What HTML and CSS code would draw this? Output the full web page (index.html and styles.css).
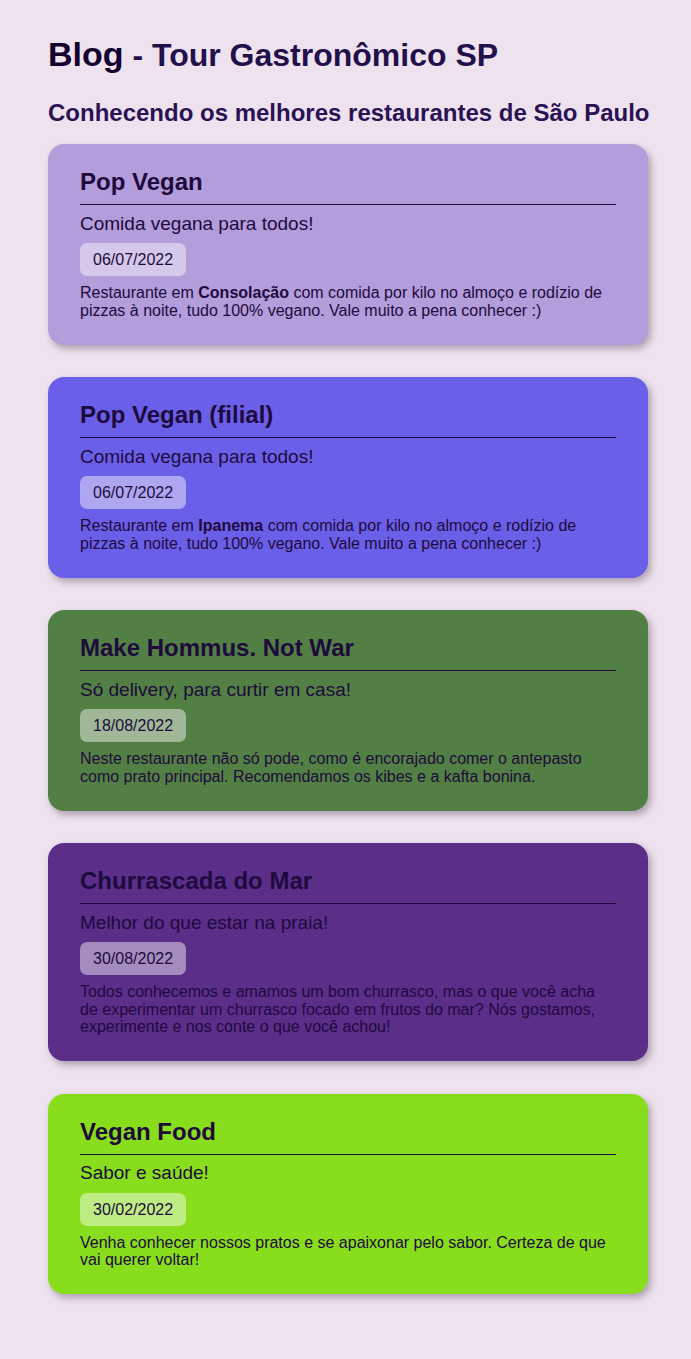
FILE: index.html
```html
<!DOCTYPE html>
<html lang="pt-BR">
<head>
<meta charset="utf-8">
<title>Blog - Tour Gastronômico SP</title>
<link rel="stylesheet" href="styles.css">
</head>
<body>
<main class="page">
  <h1 class="title"><span class="title-blog">Blog</span> - Tour Gastronômico SP</h1>
  <h2 class="subtitle">Conhecendo os melhores restaurantes de São Paulo</h2>

  <article class="card card-lilac">
    <h3 class="card-title">Pop Vegan</h3>
    <p class="card-tagline">Comida vegana para todos!</p>
    <span class="card-date">06/07/2022</span>
    <p class="card-text">Restaurante em <strong>Consolação</strong> com comida por kilo no almoço e rodízio de pizzas à noite, tudo 100% vegano. Vale muito a pena conhecer :)</p>
  </article>

  <article class="card card-indigo">
    <h3 class="card-title">Pop Vegan (filial)</h3>
    <p class="card-tagline">Comida vegana para todos!</p>
    <span class="card-date">06/07/2022</span>
    <p class="card-text">Restaurante em <strong>Ipanema</strong> com comida por kilo no almoço e rodízio de pizzas à noite, tudo 100% vegano. Vale muito a pena conhecer :)</p>
  </article>

  <article class="card card-green">
    <h3 class="card-title">Make Hommus. Not War</h3>
    <p class="card-tagline">Só delivery, para curtir em casa!</p>
    <span class="card-date">18/08/2022</span>
    <p class="card-text">Neste restaurante não só pode, como é encorajado comer o antepasto como prato principal. Recomendamos os kibes e a kafta bonina.</p>
  </article>

  <article class="card card-purple">
    <h3 class="card-title">Churrascada do Mar</h3>
    <p class="card-tagline">Melhor do que estar na praia!</p>
    <span class="card-date">30/08/2022</span>
    <p class="card-text">Todos conhecemos e amamos um bom churrasco, mas o que você acha de experimentar um churrasco focado em frutos do mar? Nós gostamos, experimente e nos conte o que você achou!</p>
  </article>

  <article class="card card-lime">
    <h3 class="card-title">Vegan Food</h3>
    <p class="card-tagline">Sabor e saúde!</p>
    <span class="card-date">30/02/2022</span>
    <p class="card-text">Venha conhecer nossos pratos e se apaixonar pelo sabor. Certeza de que vai querer voltar!</p>
  </article>
</main>
</body>
</html>
```

FILE: styles.css
```css
* { box-sizing: border-box; }

html, body {
  margin: 0;
  padding: 0;
  background: #eee2ee;
}

body {
  font-family: "Liberation Sans", Arial, sans-serif;
  color: #1e0a3c;
}

.page {
  width: 600px;
  margin-left: 48px;
  padding-top: 36px;
  padding-bottom: 64px;
  display: flex;
  flex-direction: column;
}

.title {
  margin: 0;
  font-size: 32px;
  line-height: 37px;
  font-weight: 700;
  color: #22104a;
  white-space: nowrap;
}

.title-blog {
  font-size: 34px;
  color: #14002e;
}

.subtitle {
  margin: 25px 0 0;
  font-size: 24px;
  line-height: 28px;
  font-weight: 700;
  color: #2a1255;
  white-space: nowrap;
}

.card {
  margin-top: 17px;
  padding: 24px 32px 25.5px;
  border-radius: 16px;
  box-shadow: 3px 4px 7px rgba(60, 40, 60, 0.35);
  display: flex;
  flex-direction: column;
  align-items: flex-start;
}

.card + .card { margin-top: 32.5px; }

.card-lilac { background: #b39ddb; }
.card-indigo { background: #6a5fe8; }
.card-green { background: #527f44; }
.card-purple { background: #5b2e8a; }
.card-lime { background: #88de1c; }

.card-title {
  align-self: stretch;
  margin: 0;
  padding-bottom: 8px;
  border-bottom: 1px solid #1e0a3c;
  font-size: 24px;
  line-height: 28px;
  font-weight: 700;
  color: #1e0a3c;
}

.card-tagline {
  margin: 7.5px 0 0;
  font-size: 19px;
  line-height: 22px;
}

.card-date {
  margin-top: 8.5px;
  padding: 7px 13px;
  border-radius: 7px;
  background: rgba(255, 255, 255, 0.45);
  font-size: 16px;
  line-height: 19px;
}

.card-text {
  margin: 8px 0 0;
  font-size: 16px;
  line-height: 17.5px;
}

.card-text strong { font-weight: 700; }
```
